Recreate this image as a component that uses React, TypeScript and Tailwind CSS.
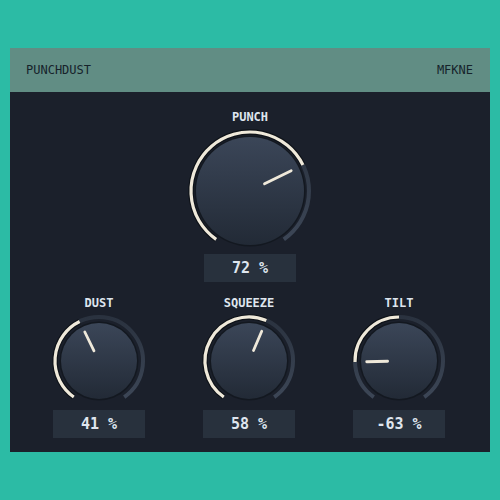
import React from 'react';

type KnobProps = {
  r: number;
  bodyR: number;
  value: number;
  bipolar?: boolean;
  id: string;
};

const SWEEP = 145;

const pt = (cx: number, cy: number, r: number, a: number) => {
  const rad = (a * Math.PI) / 180;
  return [cx + r * Math.sin(rad), cy - r * Math.cos(rad)];
};

const arc = (cx: number, cy: number, r: number, a1: number, a2: number) => {
  const [x1, y1] = pt(cx, cy, r, a1);
  const [x2, y2] = pt(cx, cy, r, a2);
  const large = a2 - a1 > 180 ? 1 : 0;
  return `M ${x1} ${y1} A ${r} ${r} 0 ${large} 1 ${x2} ${y2}`;
};

// knob drawn in svg: dark track, cream fill arc, shaded body, pointer
const Knob: React.FC<KnobProps> = ({ r, bodyR, value, bipolar, id }) => {
  const pad = 6;
  const w = 2 * (r + pad);
  const cx = w / 2;
  const cy = r + pad;
  const h = Math.ceil(cy + bodyR + 2);
  const norm = bipolar ? (value + 100) / 200 : value / 100;
  const angle = -SWEEP + norm * SWEEP * 2;
  const from = bipolar ? Math.min(0, angle) : -SWEEP;
  const to = bipolar ? Math.max(0, angle) : angle;
  const [px1, py1] = pt(cx, cy, bodyR * 0.3, angle);
  const [px2, py2] = pt(cx, cy, bodyR * 0.85, angle);

  return (
    <svg width={w} height={h} viewBox={`0 0 ${w} ${h}`}>
      <defs>
        <linearGradient id={`body-${id}`} x1="0" y1="0" x2="0" y2="1">
          <stop offset="0%" stopColor="#3b4658" />
          <stop offset="100%" stopColor="#222a36" />
        </linearGradient>
        <linearGradient id={`track-${id}`} x1="0" y1="0" x2="0" y2="1">
          <stop offset="0%" stopColor="#2a323f" />
          <stop offset="100%" stopColor="#3c4656" />
        </linearGradient>
      </defs>
      <path d={arc(cx, cy, r, -SWEEP, SWEEP)} fill="none" stroke={`url(#track-${id})`} strokeWidth={4} />
      {to - from > 0.5 && (
        <>
          <path d={arc(cx, cy, r, from, to)} fill="none" stroke="#0e1218" strokeWidth={5.5} />
          <path d={arc(cx, cy, r, from, to)} fill="none" stroke="#efe9da" strokeWidth={3.2} />
        </>
      )}
      <circle cx={cx} cy={cy} r={bodyR + 1.5} fill="#131820" />
      <circle cx={cx} cy={cy} r={bodyR} fill={`url(#body-${id})`} />
      <line x1={px1} y1={py1} x2={px2} y2={py2} stroke="#efe9da" strokeWidth={2.8} strokeLinecap="round" />
    </svg>
  );
};

const ValueBox: React.FC<{ text: string }> = ({ text }) => (
  <div className="w-[92px] h-[28px] bg-[#28313d] flex items-center justify-center text-[15px] font-bold text-[#dfe5ee] whitespace-pre">
    {text}
  </div>
);

const Label: React.FC<{ text: string }> = ({ text }) => (
  <div className="h-[14px] leading-[14px] text-[12px] font-bold text-[#dfe5ee]">{text}</div>
);

const small = [
  { name: 'DUST', value: 41, text: '41 %' },
  { name: 'SQUEEZE', value: 58, text: '58 %' },
  { name: 'TILT', value: -63, text: '-63 %', bipolar: true },
];

const App: React.FC = () => {
  return (
    <div
      className="w-[500px] h-[500px] bg-[#2cbba5] pt-[48px] px-[10px]"
      style={{ fontFamily: '"DejaVu Sans Mono", "Liberation Mono", monospace' }}
    >
      <div className="h-[404px] bg-[#1b202b] flex flex-col">
        {/* header */}
        <div className="h-[44px] bg-[#618d84] flex items-center justify-between pl-[16px] pr-[17px] text-[12px] text-[#16232b]">
          <span>PUNCHDUST</span>
          <span>MFKNE</span>
        </div>

        {/* main knob */}
        <div className="flex flex-col items-center mt-[18px]">
          <Label text="PUNCH" />
          <div className="mt-[2px] h-[121px]">
            <Knob id="punch" r={59} bodyR={54} value={72} />
          </div>
          <div className="mt-[7px]">
            <ValueBox text="72 %" />
          </div>
        </div>

        {/* small knobs */}
        <div className="grid grid-cols-[150px_150px_150px] justify-center mt-[14px] -translate-x-[1px]">
          {small.map((k) => (
            <div key={k.name} className="flex flex-col items-center">
              <Label text={k.name} />
              <div className="mt-[1px] h-[90px]">
                <Knob id={k.name} r={44} bodyR={38} value={k.value} bipolar={k.bipolar} />
              </div>
              <div className="mt-[9px]">
                <ValueBox text={k.text} />
              </div>
            </div>
          ))}
        </div>
      </div>
    </div>
  );
};

export default App;
